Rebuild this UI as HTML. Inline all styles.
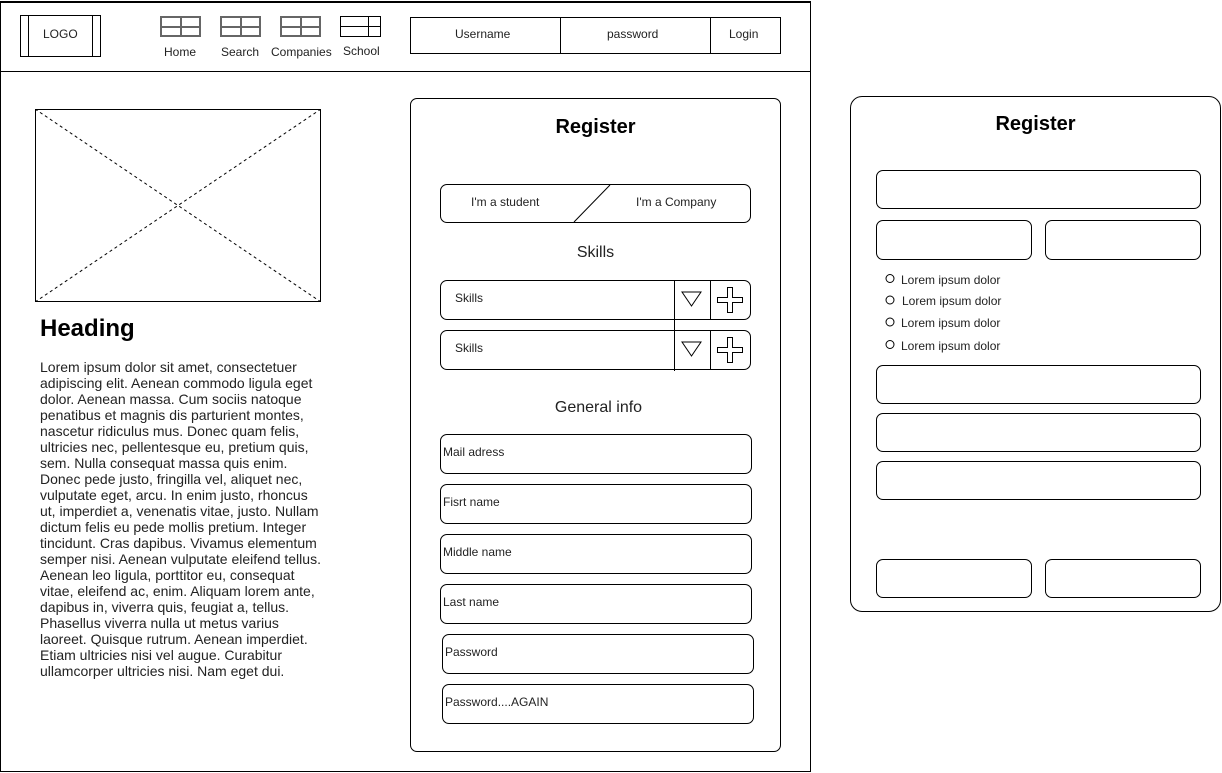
<!DOCTYPE html>
<html><head><meta charset="utf-8"><style>
body{margin:0;width:1222px;height:773px;background:#fff;position:relative;font-family:"Liberation Sans",sans-serif;color:#222;overflow:hidden}
.a{position:absolute;box-sizing:border-box}
.b{border:1px solid #000}
.r{border-radius:7px}
.t{position:absolute;font-size:12px;white-space:nowrap}
.ico{position:absolute;width:41px;height:21px;border:2px solid #666;box-sizing:border-box}
.ico:before{content:"";position:absolute;left:0;right:0;top:8px;border-top:2px solid #666}
.ico:after{content:"";position:absolute;top:0;bottom:0;left:18px;border-left:2px solid #666}
.fld{position:absolute;box-sizing:border-box;border:1px solid #000;border-radius:7px;font-size:12px;padding-left:2px;padding-bottom:4px;display:flex;align-items:center}
</style></head><body>
<div class="a b" style="left:0;top:1px;width:811px;height:771px;border-top:2px solid #000"></div>
<div class="a" style="left:0;top:71px;width:811px;border-top:1px solid #000"></div>
<div class="a b" style="left:20px;top:15px;width:81px;height:42px"></div>
<div class="a" style="left:28px;top:15px;width:65px;height:42px;border-left:1px solid #000;border-right:1px solid #000"></div>
<div class="t" style="left:43px;top:27px">LOGO</div>
<div class="ico" style="left:160px;top:16px"></div>
<div class="ico" style="left:220px;top:16px"></div>
<div class="ico" style="left:280px;top:16px"></div>
<div class="a" style="left:340px;top:16px;width:41px;height:21px;border:1px solid #000"></div>
<div class="a" style="left:340px;top:26px;width:41px;border-top:1px solid #000"></div>
<div class="a" style="left:368px;top:16px;height:21px;border-left:1px solid #000"></div>
<div class="t" style="left:164px;top:45px">Home</div>
<div class="t" style="left:221px;top:45px">Search</div>
<div class="t" style="left:271px;top:45px">Companies</div>
<div class="t" style="left:343px;top:44px">School</div>
<div class="a b" style="left:410px;top:17px;width:371px;height:37px"></div>
<div class="a" style="left:560px;top:17px;height:37px;border-left:1px solid #000"></div>
<div class="a" style="left:710px;top:17px;height:37px;border-left:1px solid #000"></div>
<div class="t" style="left:455px;top:27px">Username</div>
<div class="t" style="left:607px;top:27px">password</div>
<div class="t" style="left:729px;top:27px">Login</div>

<svg class="a" style="left:35px;top:109px" width="286" height="193"><rect x="0.5" y="0.5" width="285" height="192" fill="none" stroke="#000"/><line x1="0" y1="0" x2="286" y2="193" stroke="#000" stroke-dasharray="3,3"/><line x1="286" y1="0" x2="0" y2="193" stroke="#000" stroke-dasharray="3,3"/></svg>
<div class="t" style="left:40px;top:315px;font-size:24px;font-weight:bold;color:#000">Heading</div>
<div class="a" style="left:40px;top:359px;font-size:14px;line-height:16px;white-space:nowrap">Lorem ipsum dolor sit amet, consectetuer<br>adipiscing elit. Aenean commodo ligula eget<br>dolor. Aenean massa. Cum sociis natoque<br>penatibus et magnis dis parturient montes,<br>nascetur ridiculus mus. Donec quam felis,<br>ultricies nec, pellentesque eu, pretium quis,<br>sem. Nulla consequat massa quis enim.<br>Donec pede justo, fringilla vel, aliquet nec,<br>vulputate eget, arcu. In enim justo, rhoncus<br>ut, imperdiet a, venenatis vitae, justo. Nullam<br>dictum felis eu pede mollis pretium. Integer<br>tincidunt. Cras dapibus. Vivamus elementum<br>semper nisi. Aenean vulputate eleifend tellus.<br>Aenean leo ligula, porttitor eu, consequat<br>vitae, eleifend ac, enim. Aliquam lorem ante,<br>dapibus in, viverra quis, feugiat a, tellus.<br>Phasellus viverra nulla ut metus varius<br>laoreet. Quisque rutrum. Aenean imperdiet.<br>Etiam ultricies nisi vel augue. Curabitur<br>ullamcorper ultricies nisi. Nam eget dui.</div>

<div class="a b r" style="left:410px;top:98px;width:371px;height:654px"></div>
<div class="t" style="left:410px;width:371px;text-align:center;top:116px;font-size:20px;font-weight:bold;color:#000">Register</div>
<div class="a b r" style="left:440px;top:184px;width:311px;height:39px"></div>
<svg class="a" style="left:570px;top:184px" width="45" height="40"><line x1="4" y1="38" x2="40" y2="1" stroke="#000"/></svg>
<div class="t" style="left:471px;top:195px">I'm a student</div>
<div class="t" style="left:636px;top:195px">I'm a Company</div>
<div class="t" style="left:410px;width:371px;text-align:center;top:244px;font-size:16px">Skills</div>
<div class="t" style="left:413px;width:371px;text-align:center;top:399px;font-size:16px">General info</div>

<div class="fld" style="left:440px;top:280px;width:311px;height:40px;padding-left:14px">Skills</div>
<div class="fld" style="left:440px;top:330px;width:311px;height:40px;padding-left:14px">Skills</div>
<div class="a" style="left:674px;top:280px;height:91px;border-left:1px solid #000"></div>
<div class="a" style="left:710px;top:280px;height:40px;border-left:1px solid #000"></div>
<div class="a" style="left:710px;top:330px;height:40px;border-left:1px solid #000"></div>
<svg class="a" style="left:680px;top:288px" width="24" height="22"><polygon points="2,4 21,4 11.5,18" fill="none" stroke="#000"/></svg>
<svg class="a" style="left:680px;top:338px" width="24" height="22"><polygon points="2,4 21,4 11.5,18" fill="none" stroke="#000"/></svg>
<svg class="a" style="left:716px;top:286px" width="30" height="30"><path d="M11.5 1.5h5v10h10v5h-10v10h-5v-10h-10v-5h10z" fill="none" stroke="#000"/></svg>
<svg class="a" style="left:716px;top:336px" width="30" height="30"><path d="M11.5 1.5h5v10h10v5h-10v10h-5v-10h-10v-5h10z" fill="none" stroke="#000"/></svg>

<div class="fld" style="left:440px;top:434px;width:312px;height:40px">Mail adress</div>
<div class="fld" style="left:440px;top:484px;width:312px;height:40px">Fisrt name</div>
<div class="fld" style="left:440px;top:534px;width:312px;height:40px">Middle name</div>
<div class="fld" style="left:440px;top:584px;width:312px;height:40px">Last name</div>
<div class="fld" style="left:442px;top:634px;width:312px;height:40px">Password</div>
<div class="fld" style="left:442px;top:684px;width:312px;height:40px">Password....AGAIN</div>

<div class="a b" style="left:850px;top:96px;width:371px;height:516px;border-radius:12px"></div>
<div class="t" style="left:850px;width:371px;text-align:center;top:113px;font-size:20px;font-weight:bold;color:#000">Register</div>
<div class="fld" style="left:876px;top:170px;width:325px;height:39px"></div>
<div class="fld" style="left:876px;top:220px;width:156px;height:40px"></div>
<div class="fld" style="left:1045px;top:220px;width:156px;height:40px"></div>
<div class="fld" style="left:876px;top:365px;width:325px;height:39px"></div>
<div class="fld" style="left:876px;top:413px;width:325px;height:39px"></div>
<div class="fld" style="left:876px;top:461px;width:325px;height:39px"></div>
<div class="fld" style="left:876px;top:559px;width:156px;height:39px"></div>
<div class="fld" style="left:1045px;top:559px;width:156px;height:39px"></div>
<svg class="a" style="left:884px;top:272px" width="14" height="80"><g fill="none" stroke="#000"><circle cx="6" cy="6.5" r="4"/><circle cx="6" cy="28" r="4"/><circle cx="6" cy="50" r="4"/><circle cx="6" cy="72.5" r="4"/></g></svg>
<div class="t" style="left:901px;top:273px">Lorem ipsum dolor</div>
<div class="t" style="left:902px;top:294px">Lorem ipsum dolor</div>
<div class="t" style="left:901px;top:316px">Lorem ipsum dolor</div>
<div class="t" style="left:901px;top:339px">Lorem ipsum dolor</div>
</body></html>
